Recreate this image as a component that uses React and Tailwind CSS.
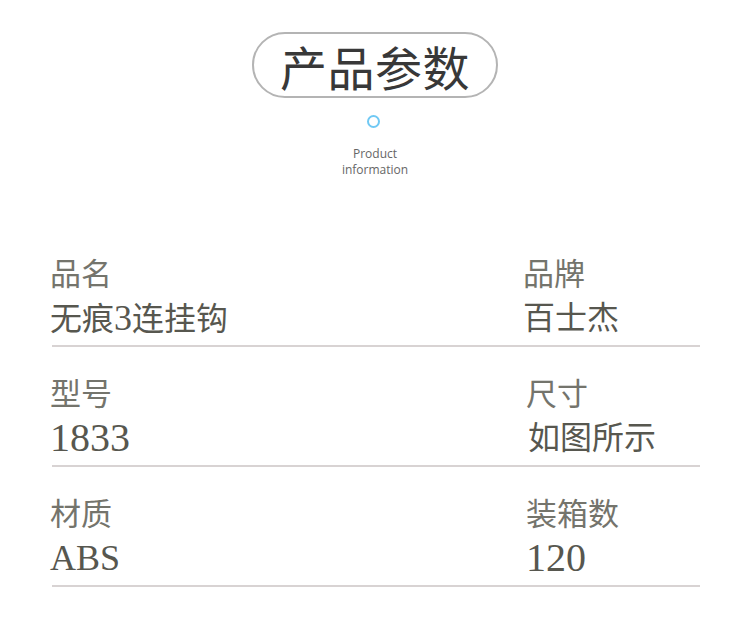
import React from "react";

const sans = { fontFamily: '"Noto Sans CJK SC", "Noto Sans", sans-serif' };

function Cell({ label, children, className = "" }) {
  return (
    <div className={"flex flex-col " + className}>
      <div className="h-[36px] text-[31px] leading-[36px] text-[#74746c] font-['Noto_Sans_CJK_SC',sans-serif]">
        {label}
      </div>
      <div className="mt-[8px] h-[40px] leading-[40px] text-[#57574f] font-['Liberation_Serif','Noto_Sans_CJK_SC',serif]">
        {children}
      </div>
    </div>
  );
}

function Row({ left, right }) {
  return (
    <div className="flex h-[120px] flex-col">
      <div className="flex h-[93px] items-start pt-[2px]">
        <div className="w-[473px]">{left}</div>
        <div className="flex-1">{right}</div>
      </div>
      <div className="ml-[2px] h-[2px] bg-[#d8d3d3]" />
    </div>
  );
}

export default function App() {
  return (
    <div className="relative h-[630px] w-[750px] overflow-hidden bg-white">
      <div className="flex flex-col items-center">
        <div className="mt-[32px] flex h-[66px] w-[246px] items-center justify-center rounded-full border-2 border-[#b4b4b4]">
          <span
            className="text-[47px] leading-none font-normal tracking-[0.5px] text-[#383838]"
            style={sans}
          >
            产品参数
          </span>
        </div>
        <div className="mt-[17px] -translate-x-[2px] h-[13px] w-[13px] rounded-full border-[2.5px] border-[#70c9f4]" />
        <div className="mt-[18px] text-center text-[12px] leading-[16px] text-[#666] font-['Open_Sans',sans-serif]">
          <div>Product</div>
          <div>information</div>
        </div>
      </div>

      <div className="ml-[50px] mt-[74px] w-[650px]">
        <Row
          left={
            <Cell label="品名">
              <span className="text-[32px]">无痕</span>
              <span className="text-[36px]">3</span>
              <span className="text-[32px]">连挂钩</span>
            </Cell>
          }
          right={
            <Cell label="品牌">
              <span className="text-[32px]">百士杰</span>
            </Cell>
          }
        />
        <Row
          left={
            <Cell label="型号">
              <span className="text-[40px]">1833</span>
            </Cell>
          }
          right={
            <Cell label="尺寸" className="pl-[3px]">
              <span className="pl-[2px] text-[32px]">如图所示</span>
            </Cell>
          }
        />
        <Row
          left={
            <Cell label="材质">
              <span className="text-[36px]">ABS</span>
            </Cell>
          }
          right={
            <Cell label="装箱数" className="pl-[3px]">
              <span className="text-[40px]">120</span>
            </Cell>
          }
        />
      </div>
    </div>
  );
}
